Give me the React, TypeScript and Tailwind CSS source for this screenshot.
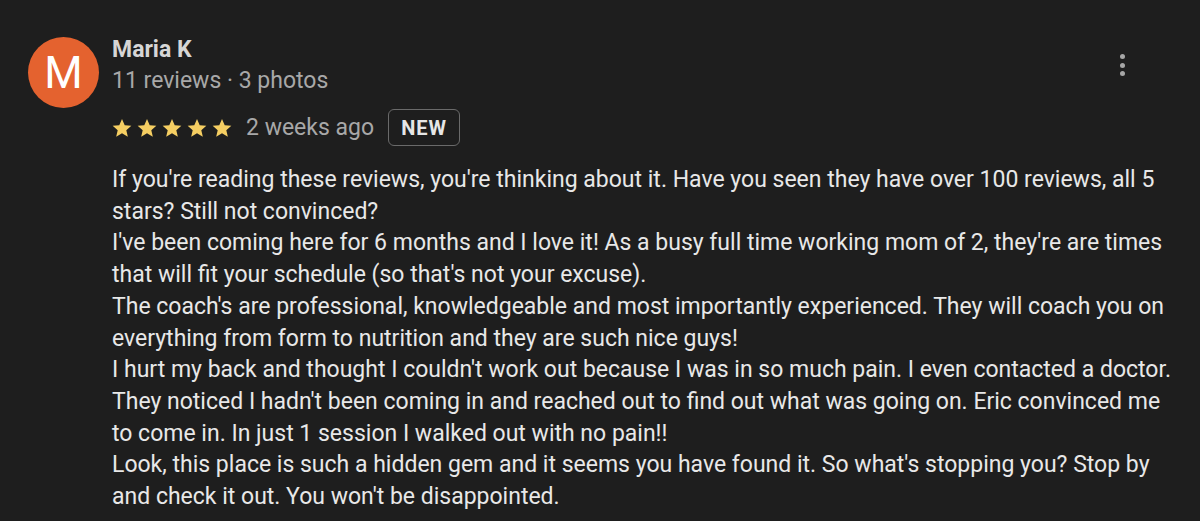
import React from "react";

const Star = () => (
  <svg width="22" height="22" viewBox="0 0 24 24" className="block">
    <path
      d="M12 2.3l2.95 6.7 7.25.65-5.5 4.8 1.65 7.15L12 17.85 5.65 21.6 7.3 14.45 1.8 9.65l7.25-.65z"
      fill="#f5ce62"
    />
  </svg>
);

export default function App() {
  return (
    <div
      className="w-[1200px] h-[521px] bg-[#1e1e1e] overflow-hidden"
      style={{ fontFamily: "Roboto, 'Noto Sans', sans-serif" }}
    >
      <div className="flex pt-[36px] pl-[28px]">
        <div className="mt-[1px] w-[71px] h-[71px] rounded-full bg-[#e4622f] flex items-center justify-center shrink-0">
          <span className="text-[44px] text-white leading-none">M</span>
        </div>
        <div className="ml-[13px] flex flex-col">
          <div className="text-[23px] font-bold text-[#d6d6d6] leading-[28px]">Maria K</div>
          <div className="text-[23px] text-[#a8a8a8] leading-[28px] mt-[3px]">11 reviews · 3 photos</div>
          <div className="flex items-center mt-[14px] h-[37px]">
            <div className="flex gap-[3px] -ml-[1px]">
              <Star />
              <Star />
              <Star />
              <Star />
              <Star />
            </div>
            <span className="ml-[13px] text-[23px] text-[#a8a8a8] leading-[28px]">2 weeks ago</span>
            <span className="ml-[14px] h-[37px] w-[72px] flex items-center justify-center rounded-[6px] border-[1.5px] border-[#6a6a6a] text-[20px] font-bold text-[#e6e6e6] tracking-[1px]">
              NEW
            </span>
          </div>
        </div>
        <div className="ml-auto mr-[75px] mt-[18px] flex flex-col gap-[3.5px]">
          <span className="w-[5px] h-[5px] rounded-full bg-[#a6a6a6]" />
          <span className="w-[5px] h-[5px] rounded-full bg-[#a6a6a6]" />
          <span className="w-[5px] h-[5px] rounded-full bg-[#a6a6a6]" />
        </div>
      </div>
      <div className="ml-[112px] w-[1073px] mt-[18px] text-[23px] leading-[31.7px] text-[#e8e8e8]">
        <p>If you're reading these reviews, you're thinking about it. Have you seen they have over 100 reviews, all 5 stars? Still not convinced?</p>
        <p>I've been coming here for 6 months and I love it! As a busy full time working mom of 2, they're are times that will fit your schedule (so that's not your excuse).</p>
        <p>The coach's are professional, knowledgeable and most importantly experienced. They will coach you on everything from form to nutrition and they are such nice guys!</p>
        <p>I hurt my back and thought I couldn't work out because I was in so much pain. I even contacted a doctor. They noticed I hadn't been coming in and reached out to find out what was going on. Eric convinced me to come in. In just 1 session I walked out with no pain!!</p>
        <p>Look, this place is such a hidden gem and it seems you have found it. So what's stopping you? Stop by and check it out. You won't be disappointed.</p>
      </div>
    </div>
  );
}
